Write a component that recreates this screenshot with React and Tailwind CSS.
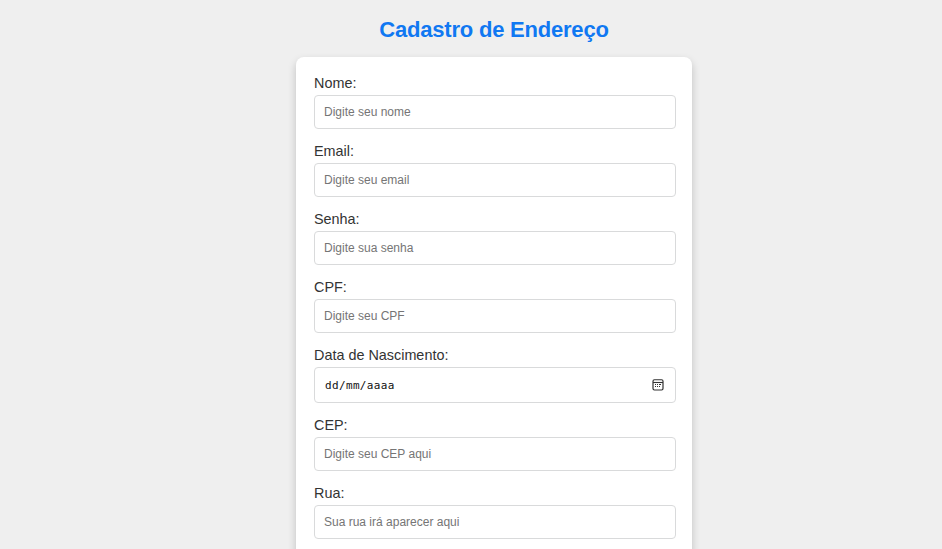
const fields = [
  { id: "nome", label: "Nome:", placeholder: "Digite seu nome" },
  { id: "email", label: "Email:", placeholder: "Digite seu email", type: "email" },
  { id: "senha", label: "Senha:", placeholder: "Digite sua senha", type: "password" },
  { id: "cpf", label: "CPF:", placeholder: "Digite seu CPF" },
  { id: "nascimento", label: "Data de Nascimento:", date: true },
  { id: "cep", label: "CEP:", placeholder: "Digite seu CEP aqui" },
  { id: "rua", label: "Rua:", placeholder: "Sua rua irá aparecer aqui" },
];

function CalendarIcon() {
  return (
    <svg className="h-3 w-3" viewBox="0 0 12 12" fill="none" stroke="#333" aria-hidden="true">
      <rect x="1" y="0.75" width="10" height="10.25" rx="1.4" strokeWidth="1.2" />
      <path d="M1 3.5h10" strokeWidth="1.1" />
      <path d="M5 5.5h1M7 5.5h2M3 7.5h1M5 7.5h1M7 7.5h1M3 5.5h1" strokeWidth="1.2" />
    </svg>
  );
}

function DateField() {
  return (
    <div className="flex h-9 items-center justify-between rounded-[4px] border border-[#d9dadb] bg-white pr-[11px] pl-2.5">
      <span className="pt-0.5 font-['DejaVu_Sans_Mono',monospace] text-[11px] leading-4 tracking-[0.35px] text-[#111]">
        dd/mm/aaaa
      </span>
      <CalendarIcon />
    </div>
  );
}

function Field({ id, label, placeholder, type = "text", date }) {
  return (
    <div className="flex flex-col">
      <label htmlFor={id} className="mb-1 h-4 text-[14.4px] leading-4 text-[#333]">
        {label}
      </label>
      {date ? (
        <DateField />
      ) : (
        <input
          id={id}
          type={type}
          placeholder={placeholder}
          className="h-[34px] w-full rounded-[4px] border border-[#d9dadb] bg-white px-[9px] text-[12px] placeholder:text-[#757575]"
        />
      )}
    </div>
  );
}

export default function App() {
  return (
    <div className="flex h-screen flex-col items-center overflow-hidden bg-[#efefef] pl-[46px] font-['Liberation_Sans',Arial,sans-serif]">
      <h1 className="mt-[17px] mb-3.5 shrink-0 text-[22px] leading-[26px] font-bold tracking-[-0.21px] text-[#1078f2]">
        Cadastro de Endereço
      </h1>
      <form className="flex w-[396px] shrink-0 flex-col gap-3.5 rounded-lg bg-white pt-[18px] pr-4 pb-10 pl-[18px] shadow-[0_4px_8px_rgba(0,0,0,0.2)]">
        {fields.map((field) => (
          <Field key={field.id} {...field} />
        ))}
      </form>
    </div>
  );
}
